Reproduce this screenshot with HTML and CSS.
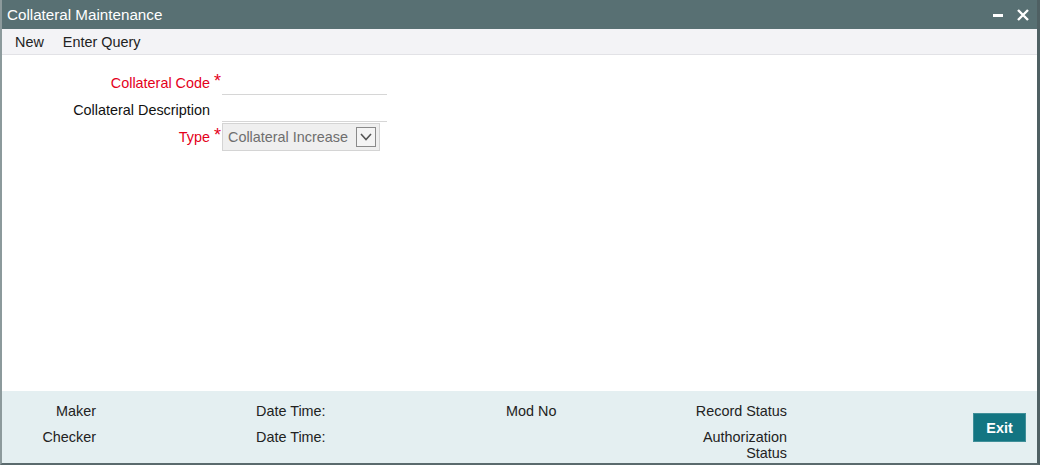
FILE: index.html
```html
<!DOCTYPE html>
<html lang="en">
<head>
  <meta charset="UTF-8" />
  <title>Collateral Maintenance</title>
  <link rel="stylesheet" href="styles.css">
</head>
<body>
  <div class="window">
    <div class="titlebar">
      <span class="title">Collateral Maintenance</span>
      <div class="win-btns">
        <span class="min"></span>
        <svg class="close" width="12" height="12" viewBox="0 0 12 12">
          <path d="M1 1 L11 11 M11 1 L1 11" stroke="#fff" stroke-width="2.4"/>
        </svg>
      </div>
    </div>

    <div class="toolbar">
      <span class="tool">New</span>
      <span class="tool">Enter Query</span>
    </div>

    <div class="form">
      <div class="row">
        <label class="lbl req">Collateral Code</label>
        <span class="star">*</span>
        <div class="field line"></div>
      </div>
      <div class="row">
        <label class="lbl">Collateral Description</label>
        <span class="star"></span>
        <div class="field line"></div>
      </div>
      <div class="row">
        <label class="lbl req">Type</label>
        <span class="star">*</span>
        <div class="select">
          <span class="sel-text">Collateral Increase</span>
          <span class="sel-btn">
            <svg width="12" height="8" viewBox="0 0 12 8">
              <path d="M1 1 L6 6.5 L11 1" fill="none" stroke="#555" stroke-width="1.6"/>
            </svg>
          </span>
        </div>
      </div>
    </div>

    <div class="footer">
      <div class="audit">
        <div class="a-col c1">
          <span>Maker</span>
          <span>Checker</span>
        </div>
        <div class="a-col c2">
          <span>Date Time:</span>
          <span>Date Time:</span>
        </div>
        <div class="a-col c3">
          <span>Mod No</span>
        </div>
        <div class="a-col c4">
          <span>Record Status</span>
          <span>Authorization<br>Status</span>
        </div>
      </div>
      <button class="exit">Exit</button>
    </div>
  </div>
</body>
</html>
```

FILE: styles.css
```css
* {
  box-sizing: border-box;
}

body {
  margin: 0;
  font-family: "Liberation Sans", Arial, sans-serif;
  font-size: 14.4px;
  color: #222;
  background: #fff;
}

.window {
  width: 1040px;
  height: 465px;
  display: flex;
  flex-direction: column;
  border-left: 2px solid #8c9a9c;
  border-right: 3px solid #4f6063;
  border-bottom: 2px solid #5a6a6d;
}

.titlebar {
  height: 29px;
  background: #587073;
  color: #fff;
  display: flex;
  align-items: center;
  justify-content: space-between;
  padding: 0 8px 0 5px;
  font-size: 15.2px;
}

.win-btns {
  display: flex;
  align-items: center;
  gap: 14px;
}

.min {
  width: 10px;
  height: 3px;
  background: #fff;
  margin-top: 1px;
}

.toolbar {
  height: 26px;
  background: #f3f3f6;
  border-bottom: 1px solid #e2e2e6;
  display: flex;
  align-items: center;
  gap: 19px;
  padding-left: 13px;
}

.form {
  flex: 1;
  padding-top: 14px;
}

.row {
  display: flex;
  align-items: center;
  height: 27px;
}

.lbl {
  width: 208px;
  text-align: right;
  color: #111;
}

.lbl.req,
.star {
  color: #e4001b;
}

.star {
  width: 12px;
  padding-left: 4px;
  font-size: 18px;
  line-height: 1;
  margin-top: -3px;
}

.field.line {
  width: 165px;
  height: 25px;
  border-bottom: 1px solid #d6d6d6;
}

.select {
  width: 158px;
  height: 28px;
  border: 1px solid #d4d4d4;
  background: #efefef;
  display: flex;
  align-items: center;
  justify-content: space-between;
  padding: 0 3px 0 5px;
  color: #6e6e6e;
}

.sel-btn {
  width: 20px;
  height: 20px;
  border: 1px solid #8a8a8a;
  background: #f4f4f4;
  display: flex;
  align-items: center;
  justify-content: center;
}

.footer {
  height: 72px;
  background: #e4eff1;
  display: flex;
  justify-content: space-between;
  padding: 12px 11px 0 0;
}

.audit {
  display: flex;
}

.a-col {
  display: flex;
  flex-direction: column;
  gap: 10px;
}

.a-col span {
  line-height: 16px;
}

.c1 {
  width: 94px;
  text-align: right;
}

.c2 {
  margin-left: 160px;
  width: 250px;
}

.c3 {
  width: 150px;
}

.c4 {
  width: 131px;
  text-align: right;
}

.exit {
  margin-top: 10px;
  width: 53px;
  height: 29px;
  background: #137582;
  border: 1px solid #3f8f99;
  color: #fff;
  font-family: "Liberation Sans", Arial, sans-serif;
  font-size: 14.4px;
  font-weight: bold;
}
```
